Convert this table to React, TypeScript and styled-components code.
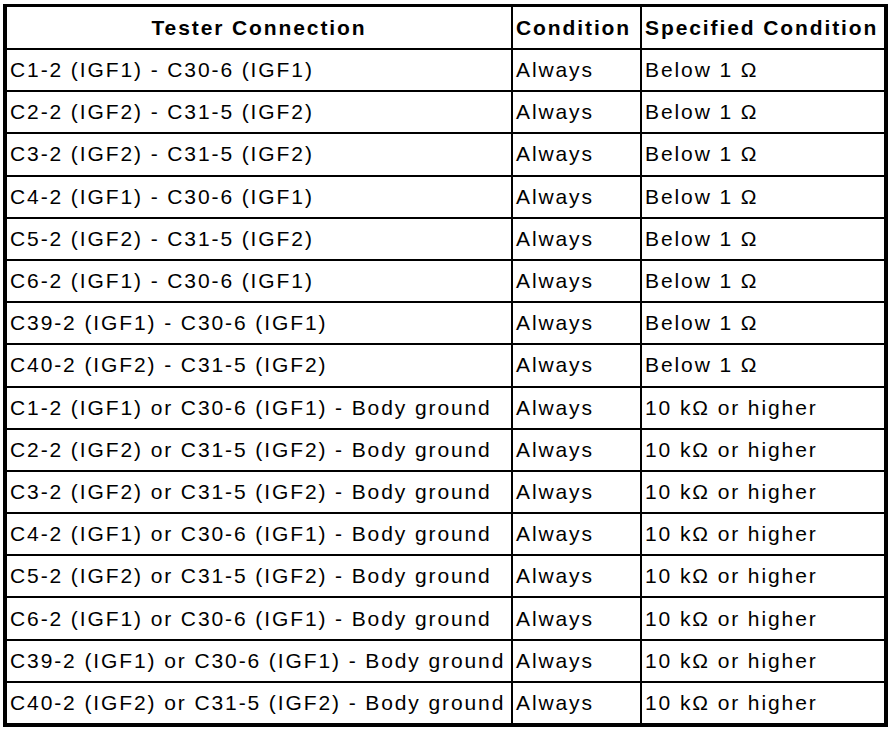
import React from "react";
import styled, { createGlobalStyle } from "styled-components";

const Global = createGlobalStyle`
  html, body {
    margin: 0;
    padding: 0;
    background: #fff;
  }
  body {
    font-family: "Liberation Sans", Arial, Helvetica, sans-serif;
    color: #000;
  }
`;

const Page = styled.div`
  padding: 4px 0 0 3px;
`;

const Sheet = styled.div`
  width: 885px;
  height: 723px;
  box-sizing: border-box;
  border: 4px solid #000;
  border-top-width: 3px;
  background: #000;
  display: grid;
  grid-template-columns: 504px 127px 242px;
  grid-template-rows: 41px repeat(16, 1fr);
  gap: 2px;
`;

const Cell = styled.div<{ $head?: boolean; $center?: boolean }>`
  background: #fff;
  display: flex;
  align-items: center;
  justify-content: ${({ $center }) => ($center ? "center" : "flex-start")};
  padding: 0 0 0 ${({ $center }) => ($center ? "0" : "3px")};
  font-size: 21px;
  font-weight: ${({ $head }) => ($head ? 700 : 400)};
  letter-spacing: 1.9px;
  white-space: nowrap;
  overflow: hidden;
`;

const rows: [string, string, string][] = [
  ["C1-2 (IGF1) - C30-6 (IGF1)", "Always", "Below 1 Ω"],
  ["C2-2 (IGF2) - C31-5 (IGF2)", "Always", "Below 1 Ω"],
  ["C3-2 (IGF2) - C31-5 (IGF2)", "Always", "Below 1 Ω"],
  ["C4-2 (IGF1) - C30-6 (IGF1)", "Always", "Below 1 Ω"],
  ["C5-2 (IGF2) - C31-5 (IGF2)", "Always", "Below 1 Ω"],
  ["C6-2 (IGF1) - C30-6 (IGF1)", "Always", "Below 1 Ω"],
  ["C39-2 (IGF1) - C30-6 (IGF1)", "Always", "Below 1 Ω"],
  ["C40-2 (IGF2) - C31-5 (IGF2)", "Always", "Below 1 Ω"],
  ["C1-2 (IGF1) or C30-6 (IGF1) - Body ground", "Always", "10 kΩ or higher"],
  ["C2-2 (IGF2) or C31-5 (IGF2) - Body ground", "Always", "10 kΩ or higher"],
  ["C3-2 (IGF2) or C31-5 (IGF2) - Body ground", "Always", "10 kΩ or higher"],
  ["C4-2 (IGF1) or C30-6 (IGF1) - Body ground", "Always", "10 kΩ or higher"],
  ["C5-2 (IGF2) or C31-5 (IGF2) - Body ground", "Always", "10 kΩ or higher"],
  ["C6-2 (IGF1) or C30-6 (IGF1) - Body ground", "Always", "10 kΩ or higher"],
  ["C39-2 (IGF1) or C30-6 (IGF1) - Body ground", "Always", "10 kΩ or higher"],
  ["C40-2 (IGF2) or C31-5 (IGF2) - Body ground", "Always", "10 kΩ or higher"],
];

export default function App() {
  return (
    <Page>
      <Global />
      <Sheet>
        <Cell $head $center>Tester Connection</Cell>
        <Cell $head>Condition</Cell>
        <Cell $head>Specified Condition</Cell>
        {rows.map((r, i) => (
          <React.Fragment key={i}>
            <Cell>{r[0]}</Cell>
            <Cell>{r[1]}</Cell>
            <Cell>{r[2]}</Cell>
          </React.Fragment>
        ))}
      </Sheet>
    </Page>
  );
}
